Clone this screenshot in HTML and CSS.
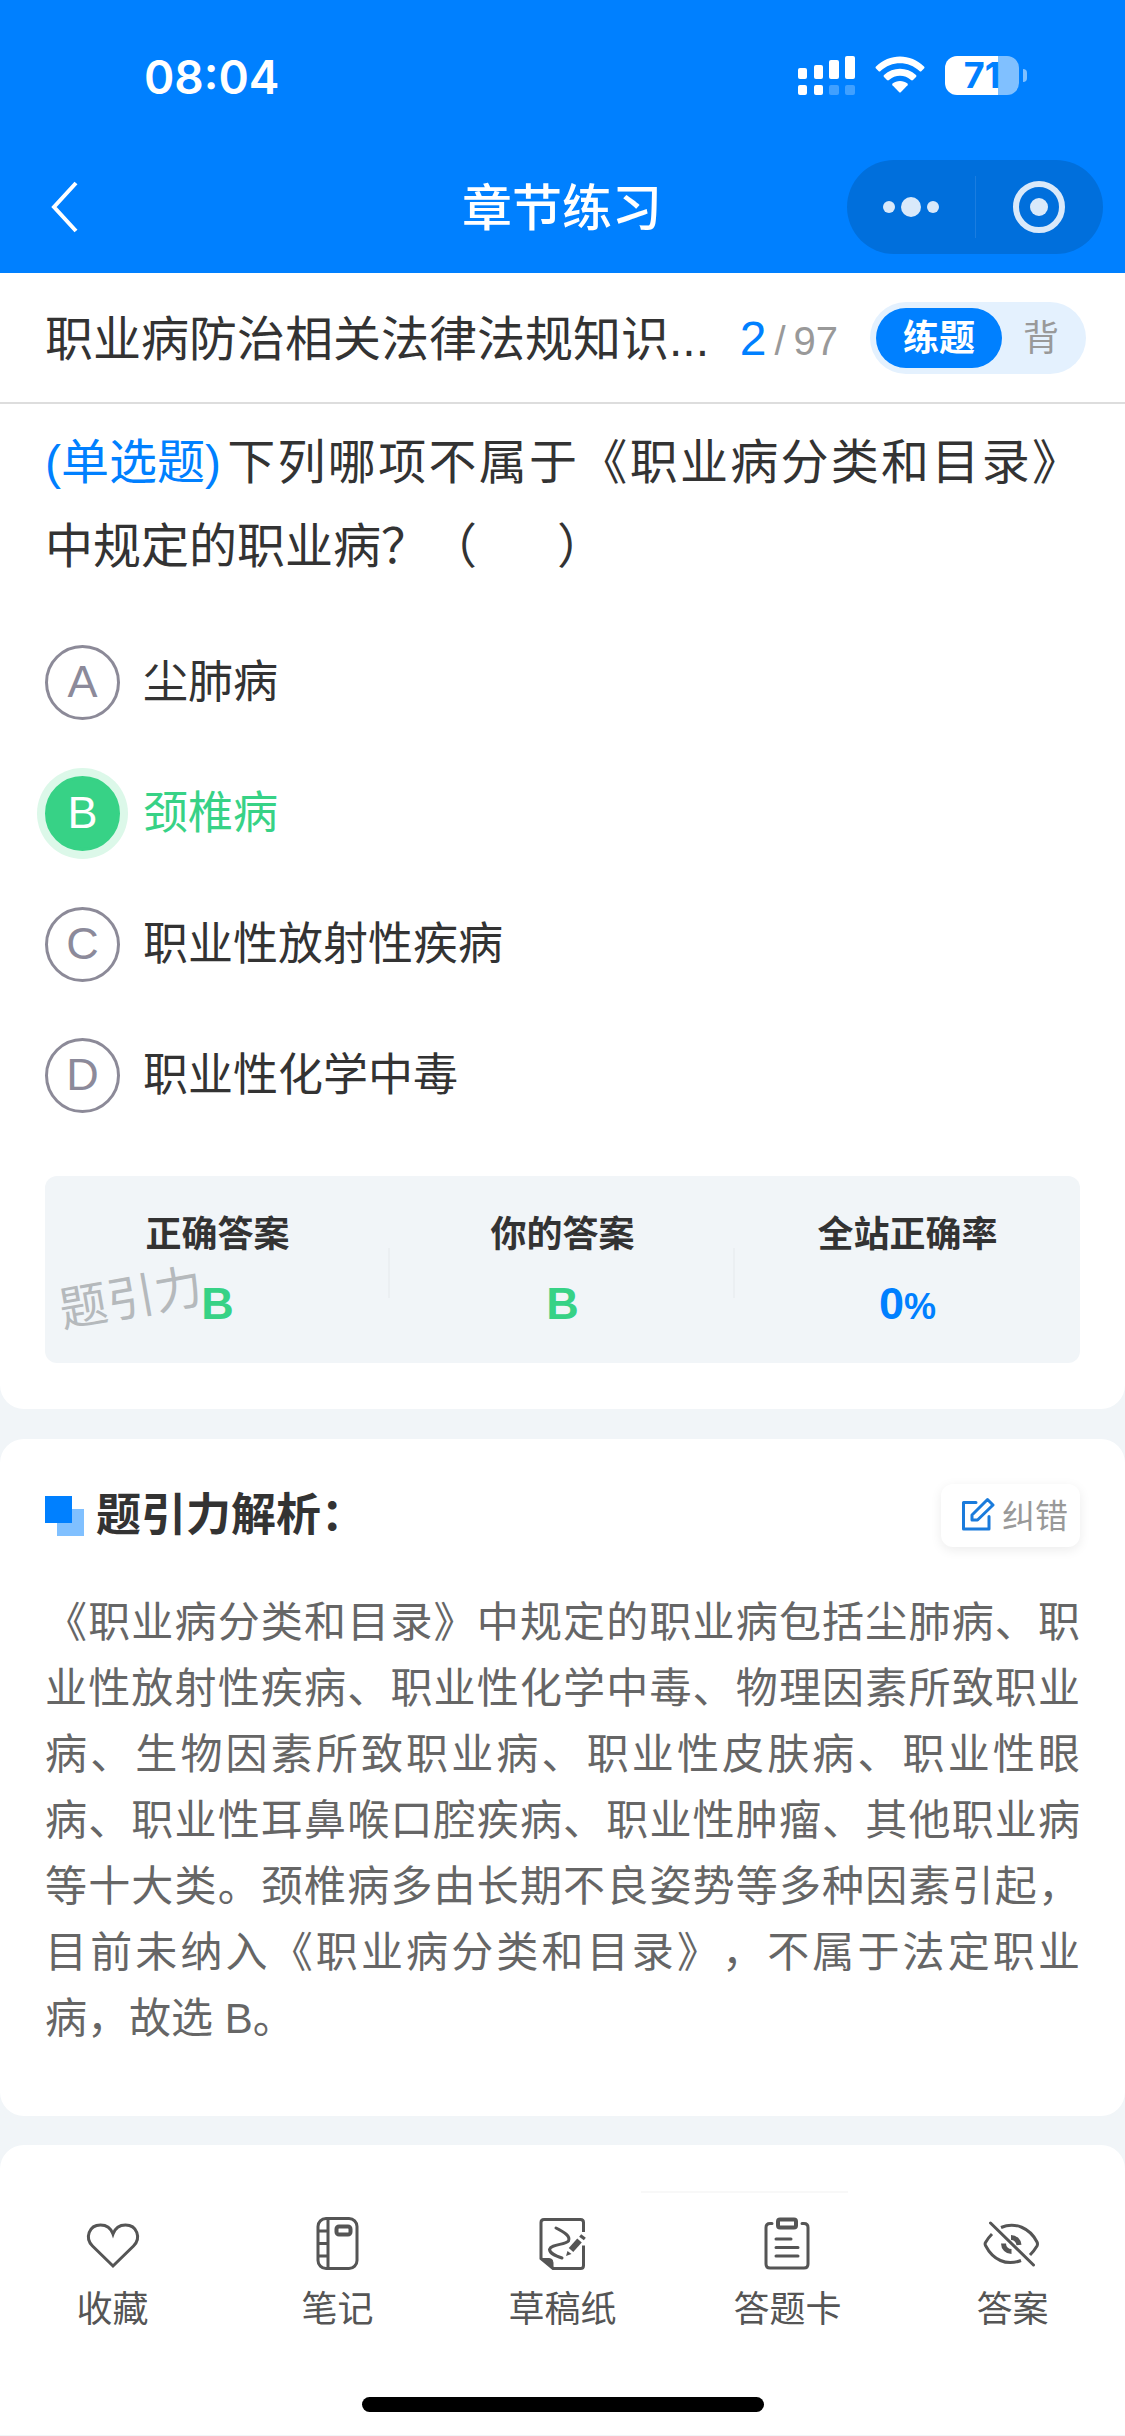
FILE: index.html
```html
<!DOCTYPE html>
<html lang="zh-CN">
<head>
<meta charset="utf-8">
<meta name="viewport" content="width=device-width, initial-scale=1">
<title>章节练习</title>
<link rel="stylesheet" href="styles.css">
</head>
<body>
<header class="header">
  <div class="status">
    <time class="clock">08:04</time>
    <div class="status-icons">
      <svg class="signal" width="57" height="39" viewBox="0 0 57 39" fill="#fff" aria-hidden="true">
        <rect x="0" y="12" width="9" height="11" rx="2"/><rect x="16" y="9" width="9" height="14" rx="2"/>
        <rect x="31" y="4" width="10" height="19" rx="2"/><rect x="47" y="0" width="10" height="23" rx="2"/>
        <rect x="0" y="29" width="9" height="10" rx="2"/><rect x="16" y="29" width="9" height="10" rx="2"/>
        <g opacity=".25"><rect x="31" y="29" width="10" height="10" rx="2"/><rect x="47" y="29" width="10" height="10" rx="2"/></g>
      </svg>
      <svg class="wifi" width="50" height="37" viewBox="0 0 50 37" fill="#fff" aria-hidden="true">
        <path d="M1 10.500C14-3 36-3 49 10.500Q50 11.500 49 12.500L46.500 15Q45.500 16 44.500 15C33.500 4.500 16.500 4.500 5.500 15Q4.500 16 3.500 15L1 12.500Q0 11.500 1 10.500Z"/>
        <path d="M9 19C18 10.500 32 10.500 41 19Q42 20 41 21L38 24Q37 24.800 36 24C30 18.300 20 18.300 14 24Q13 24.800 12 24L9 21Q8 20 9 19Z"/>
        <path d="M17.500 27.500C21.500 24 28.500 24 32.500 27.500Q33.300 28.300 32.500 29.200L26 36Q25 37 24 36L17.500 29.200Q16.700 28.300 17.500 27.500Z"/>
      </svg>
      <div class="battery"><span class="battery-level">71</span></div>
    </div>
  </div>
  <div class="titlebar">
    <button class="back" type="button" aria-label="返回">
      <svg width="32" height="54" viewBox="0 0 32 54" fill="none" stroke="#fff" stroke-width="4"><path d="M27 3 5 27l22 24"/></svg>
    </button>
    <h1 class="title">章节练习</h1>
    <div class="capsule">
      <button type="button" aria-label="更多">
        <svg width="56" height="20" viewBox="0 0 56 20" fill="#d9e9fa"><circle cx="6" cy="10" r="6"/><circle cx="28" cy="10" r="10"/><circle cx="50" cy="10" r="6"/></svg>
      </button>
      <button type="button" aria-label="关闭">
        <svg width="52" height="52" viewBox="0 0 52 52"><circle cx="26" cy="26" r="23" fill="none" stroke="#d9e9fa" stroke-width="6"/><circle cx="26" cy="26" r="9" fill="#d9e9fa"/></svg>
      </button>
    </div>
  </div>
</header>

<main>
  <section class="card card-question">
    <div class="topic">
      <h2 class="topic-name">职业病防治相关法律法规知识...</h2>
      <div class="progress"><span class="current">2</span><span>/</span><span>97</span></div>
      <div class="modes">
        <button class="mode mode-active" type="button">练题</button>
        <button class="mode" type="button">背</button>
      </div>
    </div>
    <p class="question"><span class="kind">(单选题)</span>下列哪项不属于《职业病分类和目录》中规定的职业病？（&nbsp;&nbsp;&nbsp;&nbsp;&nbsp;&nbsp;）</p>
    <div class="options" role="radiogroup">
      <label class="option"><span class="mark"><input type="radio" name="answer">A</span>尘肺病</label>
      <label class="option option-right"><span class="mark"><input type="radio" name="answer" checked>B</span>颈椎病</label>
      <label class="option"><span class="mark"><input type="radio" name="answer">C</span>职业性放射性疾病</label>
      <label class="option"><span class="mark"><input type="radio" name="answer">D</span>职业性化学中毒</label>
    </div>
    <dl class="stats">
      <div class="stat"><dt>正确答案</dt><dd>B</dd></div>
      <div class="stat"><dt>你的答案</dt><dd>B</dd></div>
      <div class="stat stat-rate"><dt>全站正确率</dt><dd>0<small>%</small></dd></div>
      <span class="watermark">题引力</span>
    </dl>
  </section>

  <section class="card card-analysis">
    <div class="analysis-head">
      <svg width="40" height="40" viewBox="0 0 40 40" aria-hidden="true"><rect x="12" y="13" width="27" height="27" fill="#80c0ff"/><rect width="27" height="27" fill="#0080ff"/></svg>
      <h2 class="analysis-title">题引力解析：</h2>
      <button class="report" type="button">
        <svg width="34" height="34" viewBox="0 0 34 34" fill="none" stroke="#1a7bdc" stroke-width="3" stroke-linejoin="round" stroke-linecap="round" aria-hidden="true"><path d="M15 5.500H2.500V32H28V19.500M11 18 26.500 2.500 32 8 16.500 23H11Z"/></svg>
        纠错
      </button>
    </div>
    <p class="analysis">《职业病分类和目录》中规定的职业病包括尘肺病、职业性放射性疾病、职业性化学中毒、物理因素所致职业病、生物因素所致职业病、职业性皮肤病、职业性眼病、职业性耳鼻喉口腔疾病、职业性肿瘤、其他职业病等十大类。颈椎病多由长期不良姿势等多种因素引起，目前未纳入《职业病分类和目录》，不属于法定职业病，故选 B。</p>
  </section>
</main>

<footer class="card toolbar">
  <nav class="tools">
    <button class="tool" type="button">
      <svg width="60" height="60" viewBox="0 0 60 60"><path d="M30 52 9.500 32C1.500 24 6 11 17.500 11c6 0 10.500 3.500 12.500 9 2-5.500 6.500-9 12.500-9C54 11 58.500 24 50.500 32Z"/></svg>
      收藏
    </button>
    <button class="tool" type="button">
      <svg width="60" height="60" viewBox="0 0 60 60"><rect x="10" y="4.500" width="39" height="50" rx="8"/><path d="M20 5v49M10 17h10M10 29.500h10M10 42h10"/><rect x="28.500" y="12.500" width="14" height="8" rx="2.500" stroke-width="4"/></svg>
      笔记
    </button>
    <button class="tool" type="button">
      <svg width="60" height="60" viewBox="0 0 60 60"><path d="M50.500 18V8.500q0-3-3-3H11q-3 0-3 3V44.500L20 54.500H47.500q3 0 3-3V31.500"/><path d="M8 44.500h8q4 0 4 4v6Z" fill="#555" stroke-width="1"/><path d="M23 14C31 18 38 22 35.500 27 32 31 18 30 16.500 35.500 17 40 23 42 29 44" stroke-linecap="round"/><path d="M38 36 46.500 26.500" stroke-width="6"/><path d="m48.500 24.500 2-2.500" stroke-width="6"/><path d="m33 42 1.500-5 4 3Z" fill="#555" stroke="none"/></svg>
      草稿纸
    </button>
    <button class="tool" type="button">
      <svg width="60" height="60" viewBox="0 0 60 60"><path d="M14 9.500h-2q-4 0-4 4V50q0 4 4 4H46q4 0 4-4V13.500q0-4-4-4h-2M18 25H33M18 33.500H40M18 42H40" stroke-linecap="round"/><rect x="20" y="5.500" width="18" height="8" rx="2" stroke-width="4"/></svg>
      答题卡
    </button>
    <button class="tool" type="button">
      <svg width="60" height="60" viewBox="0 0 60 60"><path d="M7.500 9 50.500 51" stroke-linecap="round"/><path d="M18 13.500C32 7.500 47 14 54 28q1 2 0 4-3 5-7 9M9 20q-4 4-6.500 8.500-.8 1.500 0 3C10 46 23 52 38 46.500"/><path d="M28 23.500a8 8 0 0 1 8 7.500M20.500 29.500a8 8 0 0 0 8 8" stroke-width="5"/></svg>
      答案
    </button>
  </nav>
  <div class="home-indicator"></div>
</footer>
</body>
</html>
```
FILE: styles.css
```css
* { box-sizing: border-box; }

body {
  margin: 0;
  min-height: 100vh;
  background: #f1f5f8;
  color: #333;
  font-family: "Liberation Sans", "Noto Sans CJK SC", sans-serif;
  text-spacing-trim: space-all;
}

h1, h2, p, dl, dd { margin: 0; }

button {
  padding: 0;
  border: 0;
  background: none;
  color: inherit;
  font: inherit;
}

svg { display: block; flex: none; }

/* Header */
.header { background: #0080ff; color: #fff; }

.status {
  display: flex;
  justify-content: space-between;
  height: 143px;
  padding: 56px 98px 0 144px;
}

.clock {
  font: 600 46px/42px Inter, sans-serif;
}

.status-icons { display: flex; gap: 20px; margin-right: 8px; }

.battery {
  position: relative;
  width: 74px;
  height: 39px;
  border-radius: 12px;
  background: linear-gradient(to right, #fff 72%, #80c0ff 72%);
}

.battery::after {
  content: "";
  position: absolute;
  left: 78px;
  top: 13px;
  width: 4px;
  height: 13px;
  border-radius: 0 6px 6px 0;
  background: #80c0ff;
}

.battery-level {
  display: block;
  color: #0080ff;
  font: 700 36px/39px Inter, sans-serif;
  text-align: center;
}

.titlebar {
  display: grid;
  grid-template-columns: 1fr auto 1fr;
  align-items: center;
  height: 130px;
  padding: 0 22px 2px 49px;
}

.back { justify-self: start; }

.title {
  margin-right: 28px;
  padding-top: 4px;
  font-size: 50px;
  font-weight: 500;
  line-height: 70px;
}

.capsule {
  display: flex;
  justify-self: end;
  width: 256px;
  height: 94px;
  border-radius: 47px;
  background: #006fdc;
}

.capsule button {
  display: flex;
  flex: 1;
  align-items: center;
  justify-content: center;
  position: relative;
}

.capsule button + button::before {
  content: "";
  position: absolute;
  left: 0;
  top: 16px;
  bottom: 16px;
  width: 1px;
  background: #1a7de0;
}

/* Cards */
.card { background: #fff; }

.card-question {
  padding-bottom: 46px;
  border-radius: 0 0 24px 24px;
}

.topic {
  display: flex;
  align-items: center;
  height: 131px;
  padding: 0 39px 0 45px;
  border-bottom: 2px solid #ddd;
}

.topic-name {
  flex: 1;
  min-width: 0;
  padding-top: 4px;
  overflow: hidden;
  font-size: 48px;
  font-weight: 400;
  line-height: 72px;
  white-space: nowrap;
  text-overflow: ellipsis;
}

.progress {
  display: flex;
  align-items: baseline;
  gap: 8px;
  margin: 0 32px 0 16px;
  padding-top: 4px;
  color: #999;
  font-size: 40px;
  line-height: 60px;
}

.current { color: #0080ff; font-size: 48px; }

.modes {
  display: flex;
  width: 216px;
  height: 72px;
  padding: 6px;
  border-radius: 36px;
  background: #e4f1fe;
}

.mode {
  flex: 1;
  padding-top: 2px;
  color: #999;
  font-size: 36px;
  line-height: 58px;
}

.mode-active {
  flex: none;
  width: 126px;
  border-radius: 30px;
  background: #0080ff;
  color: #fff;
  font-weight: 700;
}

/* Question */
.question {
  padding: 17px 45px 0;
  font-size: 48px;
  line-height: 84px;
  text-align: justify;
}

.kind {
  display: inline-block;
  margin-right: 4px;
  color: #0080ff;
}

.options {
  display: flex;
  flex-direction: column;
  gap: 56px;
  padding: 56px 45px 63px;
}

.option {
  display: flex;
  align-items: center;
  gap: 23px;
  font-size: 45px;
  line-height: 75px;
}

.mark {
  position: relative;
  width: 75px;
  height: 75px;
  border: 3px solid #8c8a98;
  border-radius: 50%;
  color: #8c8a9a;
  line-height: 68px;
  text-align: center;
}

.mark input {
  position: absolute;
  inset: 0;
  margin: 0;
  border-radius: 50%;
  appearance: none;
}

.option-right { color: #37d286; }

.option-right .mark {
  border-color: #37d286;
  background: #37d286;
  box-shadow: 0 0 0 8px #dcf8e9;
  color: #fff;
}

.stats {
  position: relative;
  display: grid;
  grid-template-columns: repeat(3, 1fr);
  margin: 0 45px;
  padding: 34px 0 29px;
  border-radius: 12px;
  background: #f1f5f8;
  font-weight: 700;
  text-align: center;
}

.stat {
  position: relative;
}

.stat + .stat::before {
  content: "";
  position: absolute;
  left: -2px;
  top: 38px;
  width: 2px;
  height: 50px;
  background: #ebeff2;
}

.stat dt { font-size: 36px; line-height: 50px; }

.stat dd {
  padding-top: 14px;
  color: #37d286;
  font-size: 45px;
  line-height: 60px;
}

.stat-rate dd { color: #0080ff; }
.stat-rate small { font-size: 36px; line-height: 36px; }

.watermark {
  position: absolute;
  left: 14px;
  top: 88px;
  color: #b5b9bc;
  font-size: 48px;
  font-weight: 400;
  line-height: 70px;
  transform: rotate(-10deg);
}

/* Analysis */
.card-analysis {
  margin: 30px 0 29px;
  padding: 45px 45px 64px;
  border-radius: 24px;
}

.analysis-head {
  display: flex;
  align-items: center;
  gap: 11px;
}

.analysis-title {
  flex: 1;
  font-size: 45px;
  font-weight: 700;
  line-height: 63px;
}

.report {
  display: flex;
  align-items: center;
  gap: 7px;
  height: 63px;
  padding: 0 12px 4px 20px;
  border-radius: 12px;
  box-shadow: 0 3px 12px rgba(0, 0, 0, .08);
  color: #999;
  font-size: 33px;
}

.analysis {
  padding-top: 43px;
  color: #666;
  font-size: 42px;
  line-height: 66px;
  text-align: justify;
}

/* Bottom toolbar */
.toolbar {
  position: relative;
  padding: 69px 0 23px;
  border-radius: 24px 24px 0 0;
}

.toolbar::before {
  content: "";
  position: absolute;
  left: 57%;
  top: 46px;
  width: 207px;
  height: 2px;
  background: #f8f8f8;
}

.tools {
  display: grid;
  grid-template-columns: repeat(5, 1fr);
}

.tool {
  display: flex;
  flex-direction: column;
  align-items: center;
  gap: 11px;
  color: #555;
  font-size: 36px;
  line-height: 50px;
}

.tool svg {
  fill: none;
  stroke: #555;
  stroke-width: 3;
}

.home-indicator {
  width: 402px;
  height: 15px;
  margin: 62px auto 0;
  border-radius: 8px;
  background: #000;
}
```
